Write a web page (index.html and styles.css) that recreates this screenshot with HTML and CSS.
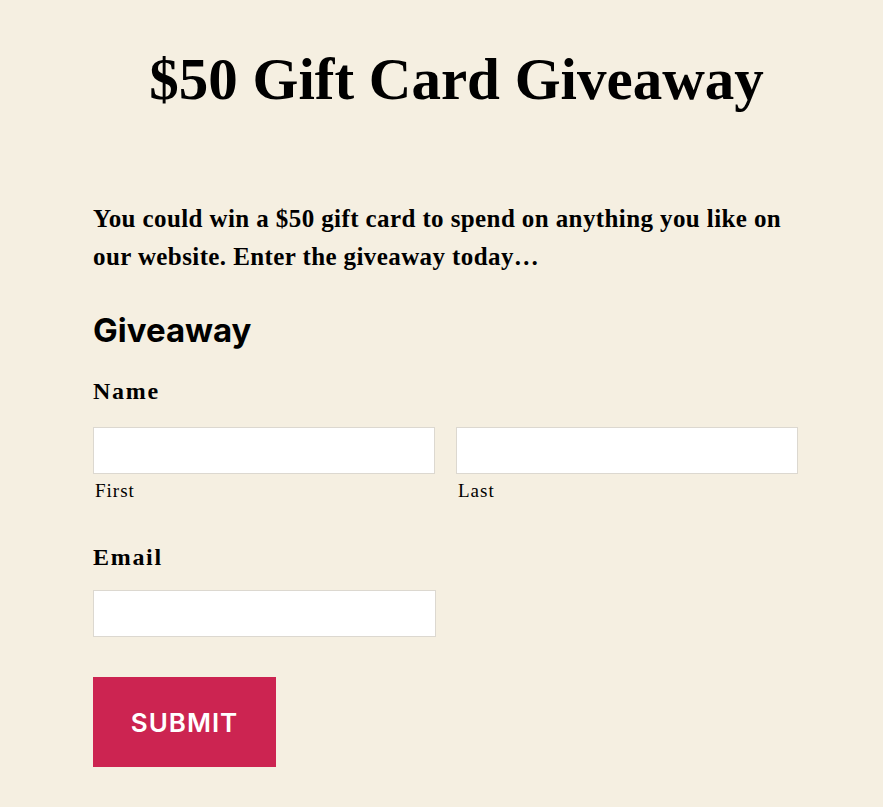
FILE: index.html
```html
<!DOCTYPE html>
<html lang="en">
  <head>
    <meta charset="UTF-8" />
    <meta name="viewport" content="width=device-width, initial-scale=1">
    <title>$50 Gift Card Giveaway</title>
    <link rel="stylesheet" href="styles.css">
  </head>
  <body>
    <div class="page">
      <h1 class="page_tit">$50 Gift Card Giveaway</h1>
      <p class="intro">You could win a $50 gift card to spend on anything you like on our website. Enter the giveaway today&hellip;</p>
      <form class="form_wrap">
        <h2 class="form_tit">Giveaway</h2>
        <div class="field">
          <p class="field_label">Name</p>
          <div class="name_row">
            <div class="sub_field">
              <input type="text" class="input">
              <span class="sub_label">First</span>
            </div>
            <div class="sub_field">
              <input type="text" class="input">
              <span class="sub_label">Last</span>
            </div>
          </div>
        </div>
        <div class="field field_email">
          <p class="field_label">Email</p>
          <div class="half">
            <input type="email" class="input">
          </div>
        </div>
        <button type="button" class="btn_submit">Submit</button>
      </form>
    </div>
  </body>
</html>
```

FILE: styles.css
```css
* {padding:0; margin:0; box-sizing: border-box;}
body, html {height: 100%;}
body {background: #f5efe1; color: #000; font-family: "Liberation Serif", "Times New Roman", serif;}
.page {width: 705px; margin: 0 0 0 93px; padding-top: 44px;}
.page_tit {font-size: 59px; font-weight: bold; line-height: 70px; text-align: center; padding-left: 22px;}
.intro {margin-top: 86px; font-size: 25px; font-weight: bold; line-height: 38px; letter-spacing: 0.4px;}
.form_wrap {margin-top: 36px;}
.form_tit {font-family: Inter, "Liberation Sans", sans-serif; font-size: 33px; font-weight: 700; line-height: 36px;}
.field {margin-top: 28px;}
.field_email {margin-top: 40px;}
.field_label {font-size: 24px; font-weight: bold; line-height: 30px; letter-spacing: 1.7px;}
.name_row {display: flex; gap: 21px; margin-top: 21px;}
.sub_field {flex: 1; display: flex; flex-direction: column;}
.half {width: 343px; margin-top: 18px;}
.input {width: 100%; height: 47px; background: #fff; border: 1px solid #dcd8d0; font-size: 16px;}
.sub_label {font-size: 19px; line-height: 22px; letter-spacing: 1px; padding-left: 2px; margin-top: 6px;}
.btn_submit {margin-top: 40px; width: 183px; height: 90px; background: #cc2451; color: #fff; border: 0; font-family: Inter, "Liberation Sans", sans-serif; font-size: 26px; font-weight: 600; text-transform: uppercase; letter-spacing: 1px;}
```
